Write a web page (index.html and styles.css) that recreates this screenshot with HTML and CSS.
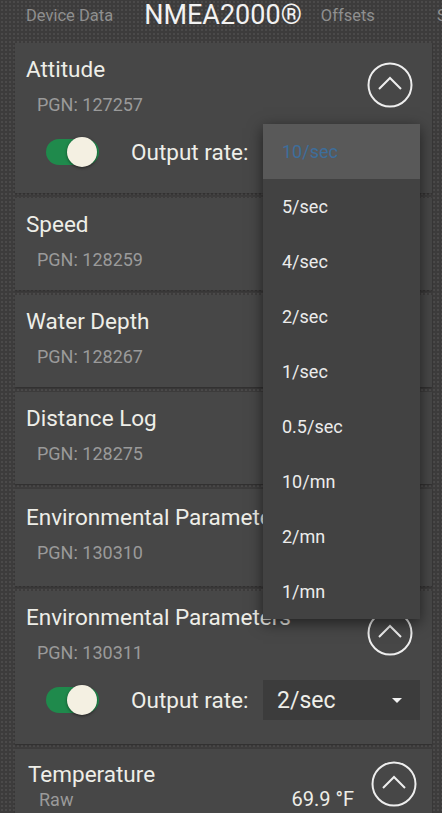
FILE: index.html
```html
<!DOCTYPE html>
<html lang="en">
<head>
  <meta charset="UTF-8">
  <meta name="viewport" content="width=device-width, initial-scale=1.0">
  <title>NMEA2000</title>
  <link rel="stylesheet" href="styles.css">
</head>
<body>
  <div id="screen">
    <div id="tabs">
      <span class="tab">Device Data</span>
      <span class="tab current">NMEA2000®</span>
      <span class="tab">Offsets</span>
      <span class="tab">S</span>
    </div>

    <div id="pgn-list">
      <div class="card open">
        <div class="card-head">
          <div>
            <div class="card-title">Attitude</div>
            <div class="card-pgn">PGN: 127257</div>
          </div>
          <span class="chevron"><svg viewBox="0 0 46 46" width="46" height="46"><circle cx="23" cy="23" r="21.5" fill="none" stroke="#eee" stroke-width="2"/><path d="M12 27 L23 16 L34 27" fill="none" stroke="#eee" stroke-width="2"/></svg></span>
        </div>
        <div class="rate-row">
          <span class="toggle"><span class="knob"></span></span>
          <span class="rate-label">Output rate:</span>
          <!-- covered by the open menu -->
          <span class="rate-select"></span>
        </div>
      </div>

      <div class="card">
        <div class="card-title">Speed</div>
        <div class="card-pgn">PGN: 128259</div>
      </div>

      <div class="card">
        <div class="card-title">Water Depth</div>
        <div class="card-pgn">PGN: 128267</div>
      </div>

      <div class="card">
        <div class="card-title">Distance Log</div>
        <div class="card-pgn">PGN: 128275</div>
      </div>

      <div class="card tall">
        <div class="card-title">Environmental Parameters</div>
        <div class="card-pgn">PGN: 130310</div>
      </div>

      <div class="card open tall">
        <div class="card-head">
          <div>
            <div class="card-title">Environmental Parameters</div>
            <div class="card-pgn">PGN: 130311</div>
          </div>
          <span class="chevron"><svg viewBox="0 0 46 46" width="46" height="46"><circle cx="23" cy="23" r="21.5" fill="none" stroke="#eee" stroke-width="2"/><path d="M12 27 L23 16 L34 27" fill="none" stroke="#eee" stroke-width="2"/></svg></span>
        </div>
        <div class="rate-row">
          <span class="toggle"><span class="knob"></span></span>
          <span class="rate-label">Output rate:</span>
          <span class="rate-select">2/sec <span class="caret"></span></span>
        </div>
      </div>

      <div class="card temp">
        <div class="temp-text">
          <div class="card-title">Temperature</div>
          <div class="temp-row">
            <span class="card-pgn">Raw</span>
            <span class="temp-value">69.9 °F</span>
          </div>
        </div>
        <span class="chevron"><svg viewBox="0 0 46 46" width="46" height="46"><circle cx="23" cy="23" r="21.5" fill="none" stroke="#eee" stroke-width="2"/><path d="M12 27 L23 16 L34 27" fill="none" stroke="#eee" stroke-width="2"/></svg></span>
      </div>
    </div>

    <ul id="rate-menu">
      <li class="selected">10/sec</li>
      <li>5/sec</li>
      <li>4/sec</li>
      <li>2/sec</li>
      <li>1/sec</li>
      <li>0.5/sec</li>
      <li>10/mn</li>
      <li>2/mn</li>
      <li>1/mn</li>
    </ul>
  </div>
</body>
</html>
```

FILE: styles.css
```css
html, body {
  margin: 0;
  height: 100%;
  overflow: hidden;
}
body {
  font-family: Roboto, "Liberation Sans", sans-serif;
  color: #eeeee8;
  background-color: #3d3c3c;
  background-image: radial-gradient(#4b4a4a 1px, transparent 1.2px);
  background-size: 4px 4px;
}
#screen {
  position: relative;
  height: 813px;
}
#tabs {
  display: flex;
  align-items: center;
  height: 30px;
  padding-left: 26px;
  white-space: nowrap;
  overflow: hidden;
}
#tabs .tab {
  font-size: 16.5px;
  color: #8f8f8f;
}
#tabs .tab.current {
  font-size: 27px;
  color: #f2f2f2;
  margin: 0 19px 0 31px;
}
#tabs .tab:last-child {
  margin-left: 62px;
}
#pgn-list {
  display: flex;
  flex-direction: column;
  gap: 5px;
  padding: 13px 10px 0 15px;
}
.card {
  background: #474747;
  padding: 13px 19px 20px 11px;
  box-shadow: 0 1px 2px rgba(0, 0, 0, 0.25);
}
.card.tall {
  padding-bottom: 23px;
}
.card.tall:not(.open) {
  padding-top: 15px;
}
.card-head {
  display: flex;
  justify-content: space-between;
}
.card-title {
  font-size: 22.5px;
  line-height: 26px;
  white-space: nowrap;
}
.card-pgn {
  font-size: 18px;
  line-height: 20px;
  color: #9a9a9a;
  margin: 13px 0 0 11px;
}
.chevron {
  display: block;
  width: 46px;
  height: 46px;
  margin-top: 6px;
}
.rate-row {
  display: flex;
  align-items: center;
  height: 40px;
  margin: 17px -7px 1px 0;
  padding-left: 20px;
}
.toggle {
  position: relative;
  width: 53px;
  height: 26px;
  border-radius: 13px;
  background: #1f8a4c;
}
.toggle .knob {
  position: absolute;
  right: 2px;
  top: -2px;
  width: 30px;
  height: 30px;
  border-radius: 50%;
  background: #f4f0e2;
  box-shadow: 0 1px 3px rgba(0, 0, 0, 0.5);
}
.rate-label {
  font-size: 22.5px;
  margin-left: 32px;
}
.rate-select {
  display: flex;
  align-items: center;
  justify-content: space-between;
  box-sizing: border-box;
  width: 157px;
  height: 40px;
  margin-left: auto;
  padding: 0 18px 0 14px;
  background: #3c3c3c;
  font-size: 23px;
}
.caret {
  width: 0;
  height: 0;
  border-left: 5px solid transparent;
  border-right: 5px solid transparent;
  border-top: 5px solid #f2f2f2;
}
.card.temp {
  display: flex;
  justify-content: space-between;
  padding: 12px 15px 20px 13px;
}
.temp-text {
  flex: 1;
}
.temp-row {
  display: flex;
  justify-content: space-between;
  align-items: baseline;
  padding-right: 17px;
}
.temp-row .card-pgn {
  margin-top: 3px;
}
.temp-value {
  font-size: 20px;
}
.card.temp .chevron {
  margin-top: 0;
}
#rate-menu {
  position: absolute;
  left: 263px;
  top: 124px;
  width: 157px;
  margin: 0;
  padding: 0;
  list-style: none;
  background: #424242;
  box-shadow: 0 4px 14px rgba(0, 0, 0, 0.55);
}
#rate-menu li {
  height: 55px;
  line-height: 55px;
  padding-left: 19px;
  font-size: 18px;
  color: #ececec;
}
#rate-menu li.selected {
  background: #595959;
  color: #3d6e9c;
}
```
